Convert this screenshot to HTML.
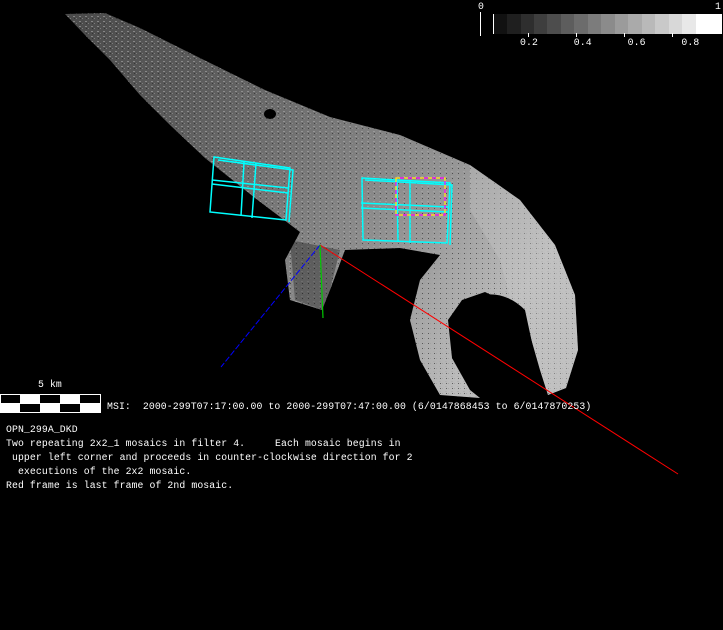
<!DOCTYPE html>
<html><head><meta charset="utf-8"><style>
html,body{margin:0;padding:0;background:#000;}
body{width:723px;height:630px;position:relative;overflow:hidden;font-family:"Liberation Mono",monospace;color:#fff;}
.t{position:absolute;font-size:9.8px;letter-spacing:0.1px;white-space:pre;line-height:14px;}
</style></head><body>
<svg width="723" height="630" style="position:absolute;left:0;top:0">
<defs>
<pattern id="sp" width="6" height="5" patternUnits="userSpaceOnUse">
<rect x="1" y="1" width="2" height="1" fill="#aaa" opacity="0.6"/><rect x="4" y="3" width="1" height="1" fill="#999" opacity="0.6"/><rect x="2" y="3" width="1" height="1" fill="#222" opacity="0.6"/>
</pattern>
<linearGradient id="g1" x1="0" y1="0" x2="1" y2="0.5">
<stop offset="0" stop-color="#4a4a4a"/><stop offset="0.3" stop-color="#5e5e5e"/><stop offset="0.55" stop-color="#7a7a7a"/><stop offset="0.8" stop-color="#9a9a9a"/><stop offset="1" stop-color="#bdbdbd"/>
</linearGradient>
</defs>
<g>
<path id="body" d="M65,14 L105,13 L140,28 L200,58 L265,90 L330,117 L400,135 L470,165 L520,200 L555,245 L575,295 L578,350 L566,388 L548,395 L540,370 L530,335 L512,305 L485,292 L462,300 L448,320 L452,358 L470,390 L480,398 L440,395 L420,360 L410,320 L420,280 L440,255 L400,248 L345,250 L330,290 L322,310 L290,300 L285,260 L300,232 L255,198 L205,158 L170,125 L140,95 L110,60 L85,35 Z" fill="url(#g1)"/>
<path d="M65,14 L105,13 L140,28 L200,58 L265,90 L330,117 L400,135 L470,165 L520,200 L555,245 L575,295 L578,350 L566,388 L548,395 L540,370 L530,335 L512,305 L485,292 L462,300 L448,320 L452,358 L470,390 L480,398 L440,395 L420,360 L410,320 L420,280 L440,255 L400,248 L345,250 L330,290 L322,310 L290,300 L285,260 L300,232 L255,198 L205,158 L170,125 L140,95 L110,60 L85,35 Z" fill="url(#sp)"/>
<path d="M470,165 L520,200 L555,245 L575,295 L578,350 L566,388 L548,395 L540,370 L530,335 L512,305 L500,260 L470,210 Z" fill="#c8c8c8" opacity="0.35"/>
<ellipse cx="270" cy="114" rx="6" ry="5" fill="#000"/>
<path d="M465,300 Q500,285 525,310 L540,380 L520,395 L490,385 L460,340 Z" fill="#000"/>
<path d="M290,240 L340,250 L330,290 L322,310 L295,300 Z" fill="#000" opacity="0.3"/>
</g>
<g fill="none" stroke="#0ff" stroke-width="1.5">
<path d="M214,157 L290,168 L286,220 L210,212 Z"/>
<path d="M212,180 L288,188"/><path d="M212,184 L288,193"/>
<path d="M244,162 L241,216"/><path d="M256,163 L252,218"/>
<path d="M218,160 L293,170 L289,222"/>
</g>
<g fill="none" stroke="#0ff" stroke-width="1.5">
<path d="M362,178 L450,183 L447,243 L363,240 Z"/>
<path d="M361,203 L448,207"/><path d="M361,208 L448,212"/>
<path d="M397,180 L398,242"/><path d="M410,181 L410,243"/>
<path d="M365,180 L452,185 L450,245"/>
</g>
<path d="M396,178 L445,178 L445,215 L396,215 Z" fill="none" stroke="#f0f" stroke-width="1.2"/>
<path d="M396,178 L445,178 L445,215 L396,215 Z" fill="none" stroke="#ff0" stroke-width="1.2" stroke-dasharray="4 4"/>
<line x1="320" y1="245" x2="678" y2="474" stroke="#f00" stroke-width="1"/>
<line x1="320" y1="245" x2="221" y2="367" stroke="#00f" stroke-width="1" stroke-dasharray="6 2"/>
<line x1="320" y1="245" x2="323" y2="318" stroke="#0c0" stroke-width="1.2"/>
<g>
<rect x="493" y="14" width="229" height="20" fill="#fff"/>
<rect x="494" y="14" width="13" height="20" fill="#111"/><rect x="507" y="14" width="14" height="20" fill="#1f1f1f"/>
<rect x="521" y="14" width="13" height="20" fill="#2e2e2e"/><rect x="534" y="14" width="13" height="20" fill="#3e3e3e"/>
<rect x="547" y="14" width="14" height="20" fill="#4d4d4d"/><rect x="561" y="14" width="13" height="20" fill="#5d5d5d"/>
<rect x="574" y="14" width="14" height="20" fill="#6c6c6c"/><rect x="588" y="14" width="13" height="20" fill="#7c7c7c"/>
<rect x="601" y="14" width="14" height="20" fill="#8b8b8b"/><rect x="615" y="14" width="13" height="20" fill="#9b9b9b"/>
<rect x="628" y="14" width="14" height="20" fill="#aaa"/><rect x="642" y="14" width="13" height="20" fill="#b9b9b9"/>
<rect x="655" y="14" width="14" height="20" fill="#c9c9c9"/><rect x="669" y="14" width="13" height="20" fill="#d8d8d8"/>
<rect x="682" y="14" width="14" height="20" fill="#e8e8e8"/>
<line x1="480.5" y1="12" x2="480.5" y2="36" stroke="#fff"/>
<line x1="528.5" y1="33" x2="528.5" y2="37" stroke="#fff"/><line x1="576.5" y1="33" x2="576.5" y2="37" stroke="#fff"/>
<line x1="624.5" y1="33" x2="624.5" y2="37" stroke="#fff"/><line x1="672.5" y1="33" x2="672.5" y2="37" stroke="#fff"/>
</g>
<rect x="0" y="394" width="101" height="19" fill="#fff"/>
<g fill="#000">
<rect x="1" y="395" width="19" height="8"/><rect x="20" y="404" width="20" height="8"/><rect x="40" y="395" width="20" height="8"/><rect x="60" y="404" width="20" height="8"/><rect x="80" y="395" width="20" height="8"/>
</g>
</svg>
<div class="t" style="left:478px;top:0px">0</div>
<div class="t" style="left:715px;top:0px">1</div>
<div class="t" style="left:520px;top:36px">0.2      0.4      0.6      0.8</div>
<div class="t" style="left:38px;top:378px">5 km</div>
<div class="t" style="left:107px;top:400px">MSI:  2000-299T07:17:00.00 to 2000-299T07:47:00.00 (6/0147868453 to 6/0147870253)</div>
<div class="t" style="left:6px;top:423px">OPN_299A_DKD
Two repeating 2x2_1 mosaics in filter 4.     Each mosaic begins in
 upper left corner and proceeds in counter-clockwise direction for 2
  executions of the 2x2 mosaic.
Red frame is last frame of 2nd mosaic.</div>
</body></html>
